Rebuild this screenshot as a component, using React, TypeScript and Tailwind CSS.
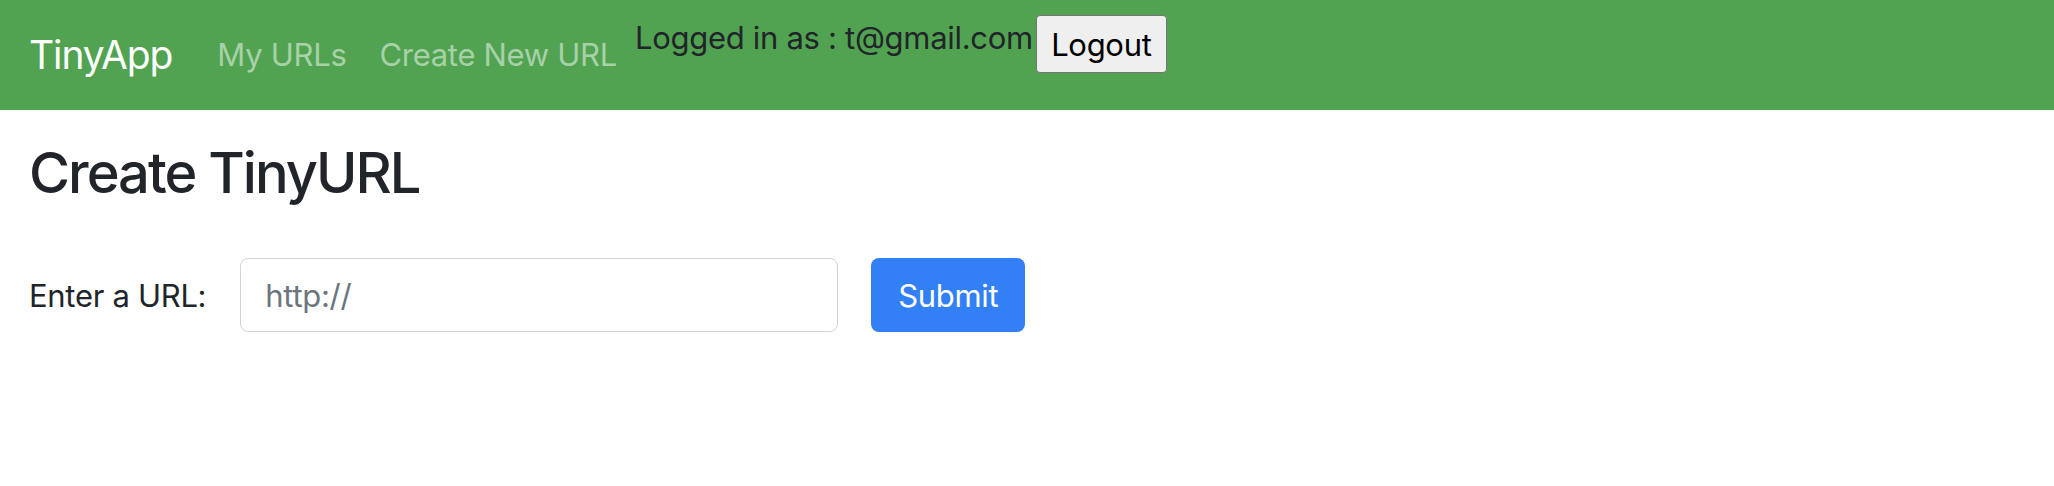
import React from "react";

export default function App() {
  const font = { fontFamily: "Inter, 'Liberation Sans', sans-serif" };
  return (
    <div style={font} className="min-h-[486px] bg-white text-[#212529]">
      <nav className="flex h-[110px] items-center bg-[#51a351] pl-[29px]">
        <a className="text-[39px] leading-[1.2] tracking-[-1.1px] text-white">TinyApp</a>
        <div className="ml-[45px] flex items-center gap-[33px]">
          <a className="text-[31px] leading-[1.2] tracking-[-0.3px] text-[#a8d1a8]">My URLs</a>
          <a className="text-[31px] leading-[1.2] tracking-[-0.3px] text-[#a8d1a8]">Create New URL</a>
        </div>
        <div className="ml-[18px] flex items-start self-start pt-[15px]">
          <span className="mt-[4px] text-[31px] leading-[1.2] tracking-[-0.3px] text-[#212529]">
            Logged in as : t@gmail.com
          </span>
          <button className="ml-[3px] flex h-[58px] w-[131px] items-center justify-center rounded-[4px] border border-[#767676] bg-[#efefef] text-[31px] leading-none tracking-[-0.3px] text-black">
            Logout
          </button>
        </div>
      </nav>
      <main className="pl-[29px]">
        <h2 className="pt-[30px] text-[56px] font-medium leading-[1.2] tracking-[-2px]">Create TinyURL</h2>
        <form className="mt-[51px] flex items-center">
          <label className="text-[31px] leading-[1.2] tracking-[-0.3px]">Enter a URL:</label>
          <input
            type="text"
            placeholder="http://"
            className="ml-[34px] h-[74px] w-[598px] rounded-[8px] border border-[#ced4da] px-[24px] text-[31px] tracking-[-0.3px] text-[#212529] outline-none placeholder:text-[#6c757d]"
          />
          <button
            type="button"
            className="ml-[33px] flex h-[74px] w-[154px] items-center justify-center rounded-[8px] bg-[#3380f6] text-[31px] leading-none tracking-[-0.3px] text-white"
          >
            Submit
          </button>
        </form>
      </main>
    </div>
  );
}
